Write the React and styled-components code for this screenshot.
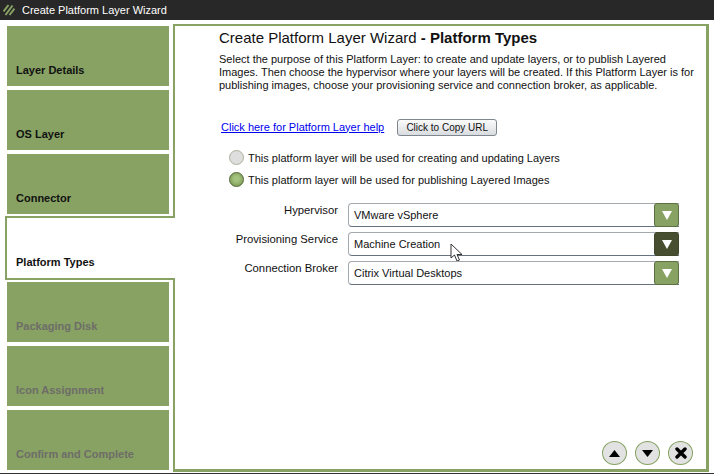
import React from "react";
import styled, { createGlobalStyle } from "styled-components";

const Global = createGlobalStyle`
  html, body { margin: 0; padding: 0; background: #fff; }
  body { width: 714px; height: 474px; overflow: hidden; font-family: "Liberation Sans", Arial, sans-serif; }
`;
const green = "#87a263";
const Shell = styled.div`width:714px;height:474px;box-sizing:border-box;display:flex;flex-direction:column;background:#fff;border-bottom:1px solid #333;`;
const TitleBar = styled.header`height:20px;background:#282828;display:flex;align-items:center;padding-left:3px;gap:7px;color:#fff;font-size:11px;`;
const Body = styled.div`flex:1;display:flex;padding:4px 5px 1px 0;min-height:0;`;
const Side = styled.nav`width:175px;flex:none;display:flex;flex-direction:column;padding-top:2px;gap:4px;position:relative;z-index:1;`;
const Tab = styled.div`
  box-sizing:border-box;height:${p=>p.$active?"64px":"60px"};
  margin:${p=>p.$active?"-2px 0 -2px 5px":"0 6px 0 7px"};
  width:${p=>p.$active?"170px":"162px"};
  background:${p=>p.$active?"#fff":green};
  border:${p=>p.$active?`2px solid ${green}`:"none"};
  border-right:none;
  padding:0 0 9px 9px;
  display:flex;align-items:flex-end;font-size:11px;font-weight:700;line-height:13px;
  color:${p=>p.$dim?"#6e6d68":"#111"};
`;
const Panel = styled.main`
  flex:1;box-sizing:border-box;margin-left:-2px;border:2px solid ${green};border-width:2px 3px 3px 2px;
  padding:3px 0 0 44px;display:flex;flex-direction:column;position:relative;
`;
const Heading = styled.h1`margin:0;font-size:15px;font-weight:400;line-height:18px;color:#111;b{font-weight:700;}`;
const Intro = styled.p`margin:6px 0 0;width:478px;font-size:11px;line-height:13px;color:#111;`;
const HelpRow = styled.div`display:flex;align-items:center;margin:27px 0 0 2px;gap:13px;`;
const Link = styled.a`font-size:11px;color:#0000ee;text-decoration:underline;margin-bottom:2px;`;
const CopyBtn = styled.button`
  width:100px;height:17px;padding:0;font:10px "Liberation Sans",Arial,sans-serif;color:#111;border:1px solid #7e8790;border-radius:3px;
  background:linear-gradient(#fbfbfb,#d9dcdf);
`;
const Radios = styled.div`display:flex;flex-direction:column;gap:7px;margin:14px 0 0 10px;`;
const RadioRow = styled.label`display:flex;align-items:center;gap:4px;height:15px;font-size:11px;color:#111;`;
const Dot = styled.span`
  width:15px;height:15px;box-sizing:border-box;border-radius:50%;flex:none;
  border:1.5px solid ${p=>p.$on?"#4c6532":"#a9b09c"};
  background:${p=>p.$on?"radial-gradient(circle at 50% 45%,#a4c37d 25%,#6f8d4a)":"#dedede"};
`;
const Fields = styled.div`display:flex;flex-direction:column;gap:5px;margin:16px 0 0 4px;`;
const Field = styled.div`display:flex;align-items:center;height:24px;`;
const FieldLabel = styled.div`width:125px;padding-right:10px;box-sizing:border-box;text-align:right;font-size:11.3px;color:#111;position:relative;top:-5px;`;
const Select = styled.div`
  width:331px;height:24px;box-sizing:border-box;display:flex;align-items:center;justify-content:space-between;
  border:1px solid #a4a9ae;border-bottom-color:#66727e;border-right:none;border-radius:4px 0 0 4px;padding-left:5px;
  font-size:11px;color:#111;position:relative;
`;
const Arrow = styled.span`
  width:25px;height:24px;box-sizing:border-box;border-radius:3px;margin:-1px 0;
  display:flex;align-items:center;justify-content:center;
  background:${p=>p.$hover?"#464e2f":green};border:1px solid ${p=>p.$hover?"#3f462a":"#5c7044"};
`;
const Cursor = styled.svg`position:absolute;left:101px;top:10px;`;
const Actions = styled.div`position:absolute;right:13px;bottom:4px;display:flex;gap:8px;`;
const RoundBtn = styled.button`
  width:25px;height:24px;padding:0;border-radius:50%;border:1px solid ${green};background:#e2e2e2;
  display:flex;align-items:center;justify-content:center;
`;

const Tri = () => (
  <svg width="10" height="9" viewBox="0 0 10 9"><path d="M0 0H10L5 9Z" fill="#fff"/></svg>
);
const Logo = () => (
  <svg width="12" height="12" viewBox="0 0 12 12" stroke="#87a263" strokeWidth="2">
    <path d="M0.5 7.5L5.5 1M2.5 11L9.5 1.5M6.5 11L11.5 4.5"/>
  </svg>
);

const tabs = [
  ["Layer Details"],["OS Layer"],["Connector"],["Platform Types","active"],
  ["Packaging Disk","dim"],["Icon Assignment","dim"],["Confirm and Complete","dim"],
];

export default function App() {
  return (
    <Shell>
      <Global />
      <TitleBar><Logo /><span>Create Platform Layer Wizard</span></TitleBar>
      <Body>
        <Side>
          {tabs.map(([t,s]) => <Tab key={t} $active={s==="active"} $dim={s==="dim"}>{t}</Tab>)}
        </Side>
        <Panel>
          <Heading>Create Platform Layer Wizard <b>- Platform Types</b></Heading>
          <Intro>Select the purpose of this Platform Layer: to create and update layers, or to publish Layered Images. Then choose the hypervisor where your layers will be created. If this Platform Layer is for publishing images, choose your provisioning service and connection broker, as applicable.</Intro>
          <HelpRow>
            <Link href="#">Click here for Platform Layer help</Link>
            <CopyBtn>Click to Copy URL</CopyBtn>
          </HelpRow>
          <Radios>
            <RadioRow><Dot />This platform layer will be used for creating and updating Layers</RadioRow>
            <RadioRow><Dot $on />This platform layer will be used for publishing Layered Images</RadioRow>
          </Radios>
          <Fields>
            <Field><FieldLabel>Hypervisor</FieldLabel><Select>VMware vSphere<Arrow><Tri /></Arrow></Select></Field>
            <Field><FieldLabel>Provisioning Service</FieldLabel><Select>Machine Creation
              <Cursor width="13" height="20" viewBox="0 0 13 20"><path d="M1 1V15L4.5 12L7 18L9.5 17L7 11.5H12Z" fill="#fff" stroke="#333" strokeWidth="1"/></Cursor>
              <Arrow $hover><Tri /></Arrow></Select></Field>
            <Field><FieldLabel>Connection Broker</FieldLabel><Select>Citrix Virtual Desktops<Arrow><Tri /></Arrow></Select></Field>
          </Fields>
          <Actions>
            <RoundBtn><svg width="11" height="7" viewBox="0 0 11 7"><path d="M5.5 0L11 7H0Z" fill="#000"/></svg></RoundBtn>
            <RoundBtn><svg width="11" height="7" viewBox="0 0 11 7"><path d="M0 0H11L5.5 7Z" fill="#000"/></svg></RoundBtn>
            <RoundBtn><svg width="12" height="12" viewBox="0 0 12 12"><path d="M2 2L10 10M10 2L2 10" stroke="#000" strokeWidth="3.4" strokeLinecap="round"/></svg></RoundBtn>
          </Actions>
        </Panel>
      </Body>
    </Shell>
  );
}
